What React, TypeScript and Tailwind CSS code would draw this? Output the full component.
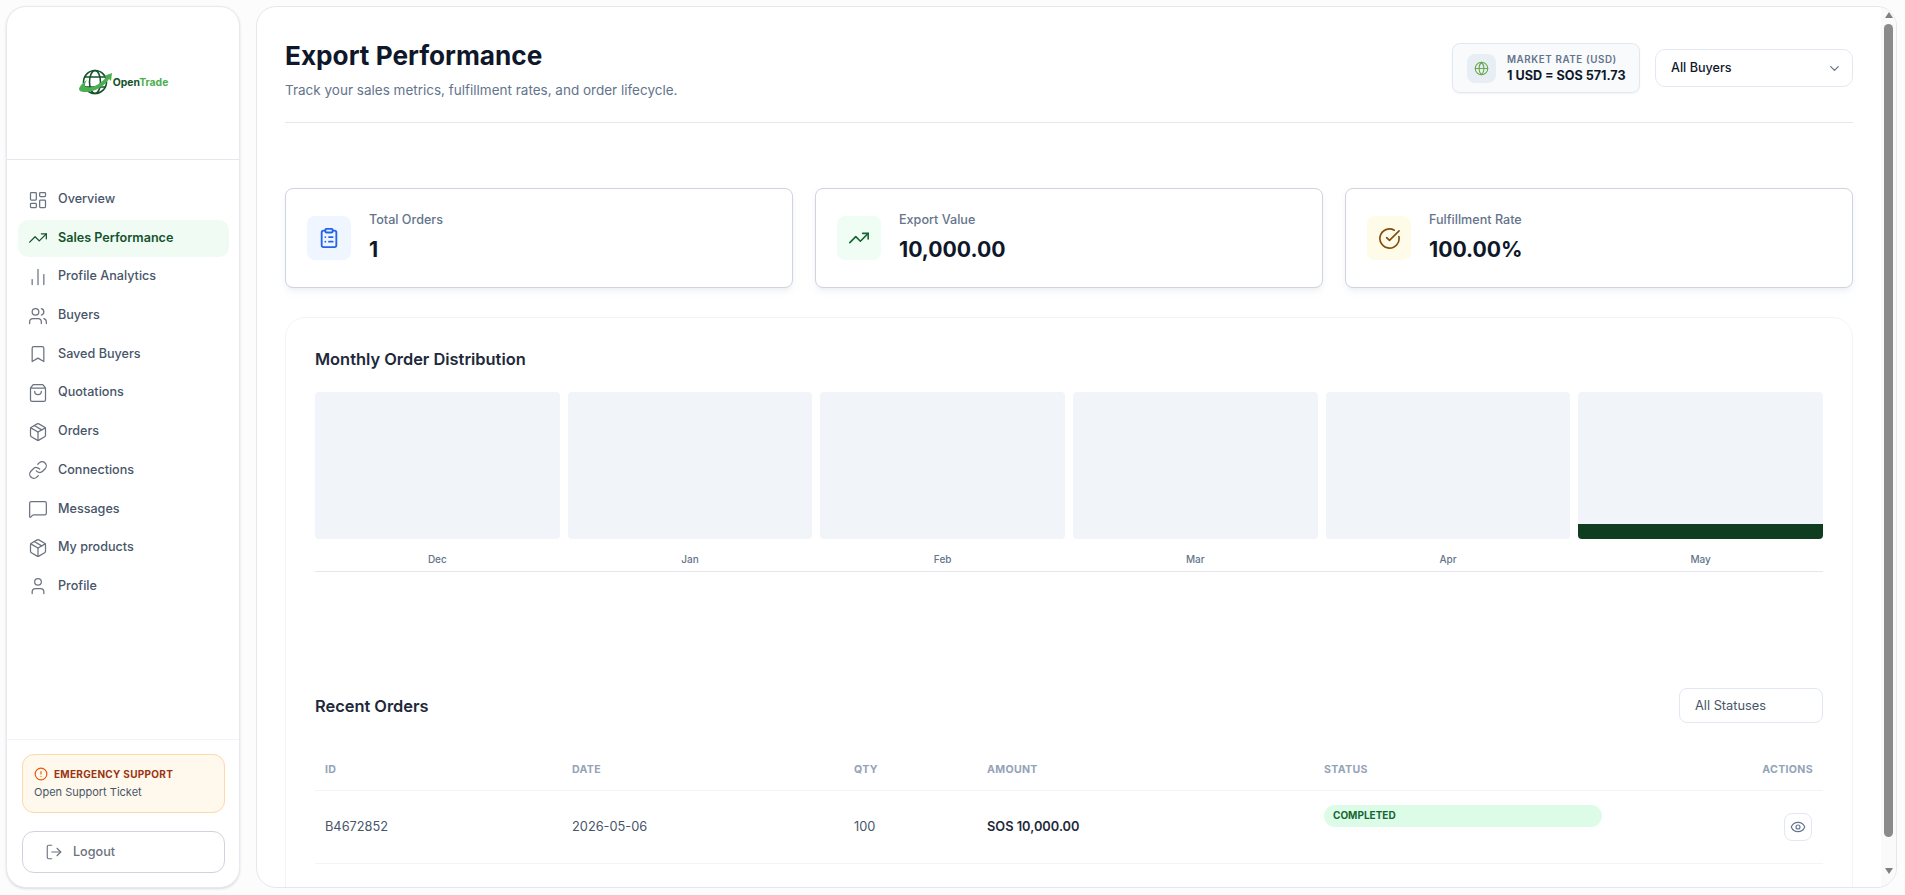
import {
  LayoutDashboard,
  TrendingUp,
  ChartNoAxesColumn,
  Users,
  Bookmark,
  ShoppingBag,
  Package,
  Link as LinkIcon,
  MessageSquare,
  User,
  CircleAlert,
  LogOut,
  Globe,
  ChevronDown,
  ClipboardList,
  CircleCheckBig,
  Eye,
} from 'lucide-react';

const navItems = [
  { label: 'Overview', icon: LayoutDashboard },
  { label: 'Sales Performance', icon: TrendingUp, active: true },
  { label: 'Profile Analytics', icon: ChartNoAxesColumn },
  { label: 'Buyers', icon: Users },
  { label: 'Saved Buyers', icon: Bookmark },
  { label: 'Quotations', icon: ShoppingBag },
  { label: 'Orders', icon: Package },
  { label: 'Connections', icon: LinkIcon },
  { label: 'Messages', icon: MessageSquare },
  { label: 'My products', icon: Package },
  { label: 'Profile', icon: User },
];

const months = ['Dec', 'Jan', 'Feb', 'Mar', 'Apr', 'May'];

function Logo() {
  return (
    <div className="mt-[2px] flex items-center">
      <svg width="36" height="28" viewBox="0 0 36 28" fill="none">
        <g stroke="#14532d" strokeWidth="1.6">
          <circle cx="17" cy="13" r="11.5" />
          <ellipse cx="17" cy="13" rx="5.5" ry="11.5" />
          <path d="M6 8h22M6 18h22" />
        </g>
        <path d="M1 20c1-4 5-7 8-9-2 3-3 6-1 7 5 2 15-3 20-10l-2-1 8-3-1 8-2-2C26 18 14 24 6 23c-3 0-5-1-5-3z" fill="#4caf50" />
      </svg>
      <span className="ml-[-1px] text-[10.4px] leading-none font-bold text-[#14532d]">
        Open<span className="text-[#4caf50]">Trade</span>
      </span>
    </div>
  );
}

function Sidebar() {
  return (
    <aside className="flex w-[234px] shrink-0 flex-col rounded-[20px] border border-[#e8e9ee] bg-white shadow-sm">
      <div className="flex h-[153px] items-center justify-center border-b border-[#e5e7eb] pb-[2px]">
        <Logo />
      </div>
      <nav className="flex flex-1 flex-col gap-[1.7px] pt-[21px] pr-[10px] pl-[11px]">
        {navItems.map((item) => (
          <div
            key={item.label}
            className={
              item.active
                ? 'flex h-[37px] items-center gap-[10px] rounded-[10px] bg-[#effbf3] px-[10px] text-[12.6px] font-semibold text-[#14532d]'
                : 'flex h-[37px] items-center gap-[10px] rounded-[10px] px-[10px] text-[12.6px] font-medium text-[#475569]'
            }
          >
            <item.icon size={20} strokeWidth={1.5} className={item.active ? 'text-[#14532d]' : 'text-[#6b7280]'} />
            {item.label}
          </div>
        ))}
      </nav>
      <div className="border-t border-[#f1f5f9] pt-[14px] pr-[14px] pb-[14px] pl-[15px]">
        <div className="h-[59px] rounded-[12px] border border-[#fed7aa] bg-[#fff9ed] px-[11px] pt-[11px]">
          <div className="flex items-center gap-[6px] text-[10px] leading-[16px] font-bold tracking-[0.03em] text-[#9a3412]">
            <CircleAlert size={14} strokeWidth={2} className="text-[#ea580c]" />
            EMERGENCY SUPPORT
          </div>
          <p className="mt-[2px] text-[11px] leading-[16px] text-[#475569]">Open Support Ticket</p>
        </div>
        <div className="mt-[18px] flex h-[42px] items-center gap-[10px] rounded-[12px] border border-[#cfd3dc] pl-[22px] text-[12.6px] font-medium text-[#6b7280]">
          <LogOut size={18} strokeWidth={1.5} />
          Logout
        </div>
      </div>
    </aside>
  );
}

function StatCard({
  label,
  value,
  iconBg,
  children,
}: {
  label: string;
  value: string;
  iconBg: string;
  children: React.ReactNode;
}) {
  return (
    <div className="flex h-[100px] items-center gap-[18px] rounded-[8px] border border-[#d1d3dd] bg-white pl-[21px] shadow-md shadow-slate-200/50">
      <div className={`flex size-[44px] items-center justify-center rounded-[8px] ${iconBg}`}>{children}</div>
      <div>
        <p className="text-[12.6px] leading-[16px] font-medium text-[#64748b]">{label}</p>
        <p className="mt-[5px] text-[21.2px] leading-[32px] font-bold text-[#0f172a]">{value}</p>
      </div>
    </div>
  );
}

function Scrollbar() {
  return (
    <div className="flex w-[15px] shrink-0 flex-col items-center bg-[#fafafa]">
      <div className="mt-[5px] h-0 w-0 border-x-[4px] border-b-[6px] border-x-transparent border-b-[#808080]" />
      <div className="mt-[6px] h-[813px] w-[9px] rounded-full bg-[#8b8b8b]" />
      <div className="mt-[31px] h-0 w-0 border-x-[4px] border-t-[6px] border-x-transparent border-t-[#808080]" />
    </div>
  );
}

export default function App() {
  return (
    <div className="flex h-screen gap-[16px] overflow-hidden bg-[#fcfcfd] pt-[6px] pr-[8px] pb-[7px] pl-[6px] font-['Inter',sans-serif]">
      <Sidebar />
      <main className="flex min-w-0 flex-1 overflow-hidden rounded-[20px] border border-[#e5e7eb] bg-white">
        <div className="min-w-0 flex-1 overflow-hidden pr-[28px] pl-[28px]">
          <header className="flex items-start justify-between border-b border-[#e5e7eb] pt-[29px] pb-[22px]">
            <div>
              <h1 className="text-[26.2px] leading-[40px] font-bold text-[#0f172a]">Export Performance</h1>
              <p className="mt-[4px] text-[13.5px] leading-[20px] text-[#64748b]">
                Track your sales metrics, fulfillment rates, and order lifecycle.
              </p>
            </div>
            <div className="mt-[7px] flex items-center gap-[15px]">
              <div className="flex h-[50px] w-[188px] items-center gap-[11px] rounded-[8px] border border-[#e2e8f0] bg-[#f8fafc] pl-[14px] shadow-xs">
                <div className="flex size-[29px] items-center justify-center rounded-[8px] bg-[#e8eff4]">
                  <Globe size={15} strokeWidth={1.75} className="text-[#6aa84f]" />
                </div>
                <div>
                  <p className="text-[9.8px] leading-[13px] font-semibold tracking-[0.06em] text-[#64748b]">MARKET RATE (USD)</p>
                  <p className="mt-[1px] text-[12.6px] leading-[17px] font-bold text-[#0f172a]">1 USD = SOS 571.73</p>
                </div>
              </div>
              <div className="flex h-[38px] w-[198px] items-center justify-between rounded-[10px] border border-[#e2e8f0] pr-[10px] pl-[15px] text-[12.6px] font-medium text-[#0f172a]">
                All Buyers
                <ChevronDown size={15} className="text-[#64748b]" />
              </div>
            </div>
          </header>

          <section className="mt-[65px] grid grid-cols-3 gap-[22px]">
            <StatCard label="Total Orders" value="1" iconBg="bg-[#eff6ff]">
              <ClipboardList size={22} strokeWidth={2} className="text-[#2563eb]" />
            </StatCard>
            <StatCard label="Export Value" value="10,000.00" iconBg="bg-[#f0fdf4]">
              <TrendingUp size={22} strokeWidth={1.75} className="text-[#166534]" />
            </StatCard>
            <StatCard label="Fulfillment Rate" value="100.00%" iconBg="bg-[#fefce8]">
              <CircleCheckBig size={23} strokeWidth={1.75} className="text-[#854d0e]" />
            </StatCard>
          </section>

          <section className="mt-[29px] rounded-[20px] border border-[#f1f5f9] bg-white px-[29px] pt-[29px] pb-[40px]">
            <h2 className="text-[16.4px] leading-[24px] font-semibold text-[#1e293b]">Monthly Order Distribution</h2>
            <div className="mt-[21px] grid grid-cols-6 gap-[8px] border-b border-[#e5e7eb] pb-[5px]">
              {months.map((m) => (
                <div key={m}>
                  <div className="flex h-[147px] flex-col justify-end overflow-hidden rounded-[4px] bg-[#f1f5f9]">
                    {m === 'May' && <div className="h-[15px] bg-[#0f3d1f]" />}
                  </div>
                  <p className="mt-[13px] text-center text-[10px] leading-[14px] font-medium text-[#64748b]">{m}</p>
                </div>
              ))}
            </div>

            <div className="mt-[116px] flex items-center justify-between">
              <h2 className="text-[16.4px] leading-[24px] font-semibold text-[#1e293b]">Recent Orders</h2>
              <div className="flex h-[35px] w-[144px] items-center rounded-[8px] border border-[#e2e8f0] pl-[15px] text-[12.8px] text-[#475569]">
                All Statuses
              </div>
            </div>

            <table className="mt-[27px] w-full table-fixed">
              <thead>
                <tr className="h-[40px] border-b border-[#f1f5f9] text-left text-[10.6px] tracking-[0.03em] text-[#94a3b8]">
                  <th className="w-[247px] px-[10px] pt-[1px] font-bold">ID</th>
                  <th className="w-[282px] px-[10px] pt-[1px] font-bold">DATE</th>
                  <th className="w-[133px] px-[10px] pt-[1px] font-bold">QTY</th>
                  <th className="w-[337px] px-[10px] pt-[1px] font-bold">AMOUNT</th>
                  <th className="w-[298px] px-[10px] pt-[1px] font-bold">STATUS</th>
                  <th className="px-[10px] pt-[1px] text-right font-bold">ACTIONS</th>
                </tr>
              </thead>
              <tbody>
                <tr className="h-[73px] border-b border-[#f1f5f9] text-[12.8px] text-[#475569]">
                  <td className="px-[10px]">B4672852</td>
                  <td className="px-[10px]">2026-05-06</td>
                  <td className="px-[10px]">100</td>
                  <td className="px-[10px] font-semibold text-[#1e293b]">SOS 10,000.00</td>
                  <td className="px-[10px] align-top">
                    <div className="mt-[14px] flex h-[22px] items-center rounded-full bg-[#dcfce7] px-[9px] text-[10px] font-bold text-[#166534]">
                      COMPLETED
                    </div>
                  </td>
                  <td className="pr-[11px] pl-[10px]">
                    <div className="ml-auto flex size-[28px] items-center justify-center rounded-[8px] border border-[#e2e8f0]">
                      <Eye size={16} strokeWidth={1.75} className="text-[#64748b]" />
                    </div>
                  </td>
                </tr>
              </tbody>
            </table>
          </section>
        </div>
        <Scrollbar />
      </main>
    </div>
  );
}
